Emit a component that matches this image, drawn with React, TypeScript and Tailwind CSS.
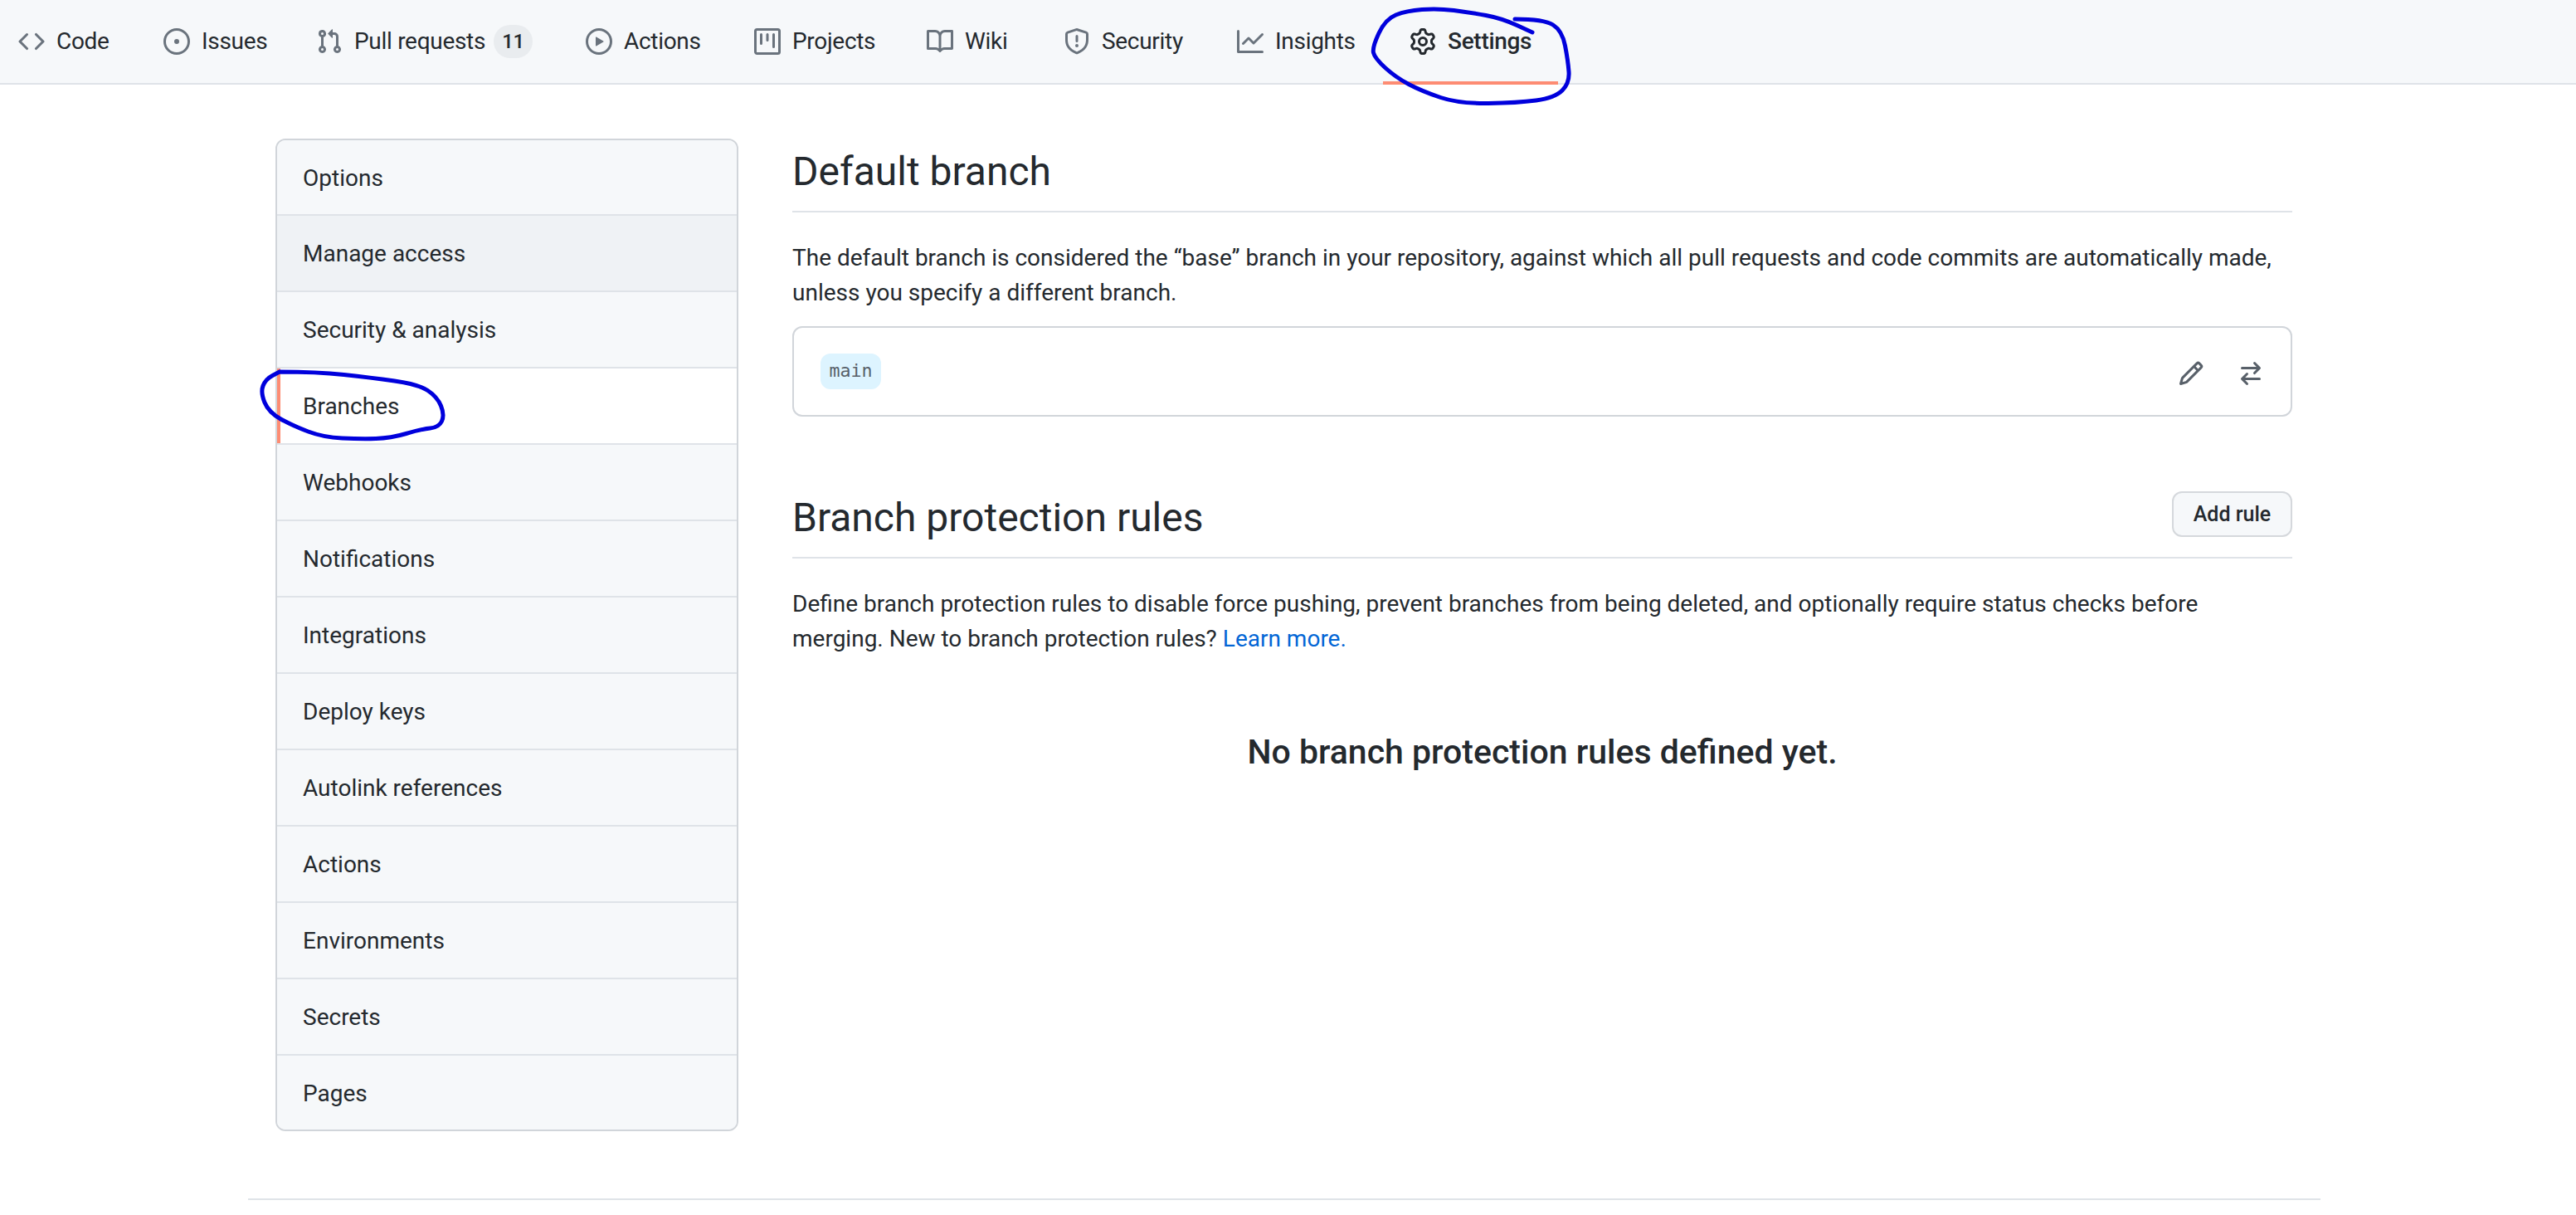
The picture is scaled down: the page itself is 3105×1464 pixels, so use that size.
const FONT = "font-['Roboto',sans-serif]";

const octicons = {
  code: "M4.72 3.22a.75.75 0 011.06 1.06L2.06 8l3.72 3.72a.75.75 0 11-1.06 1.06L.47 8.53a.75.75 0 010-1.06l4.25-4.25zm6.56 0a.75.75 0 10-1.06 1.06L13.94 8l-3.72 3.72a.75.75 0 101.06 1.06l4.25-4.25a.75.75 0 000-1.06l-4.25-4.25z",
  issue: "M8 9.5a1.5 1.5 0 100-3 1.5 1.5 0 000 3zM8 0a8 8 0 100 16A8 8 0 008 0zM1.5 8a6.5 6.5 0 1113 0 6.5 6.5 0 01-13 0z",
  pr: "M7.177 3.073L9.573.677A.25.25 0 0110 .854v4.792a.25.25 0 01-.427.177L7.177 3.427a.25.25 0 010-.354zM3.75 2.5a.75.75 0 100 1.5.75.75 0 000-1.5zm-2.25.75a2.25 2.25 0 113 2.122v5.256a2.251 2.251 0 11-1.5 0V5.372A2.25 2.25 0 011.5 3.25zM11 2.5h-1V4h1a1 1 0 011 1v5.628a2.251 2.251 0 101.5 0V5A2.5 2.5 0 0011 2.5zm1 10.25a.75.75 0 111.5 0 .75.75 0 01-1.5 0zM3.75 12a.75.75 0 100 1.5.75.75 0 000-1.5z",
  play: "M1.5 8a6.5 6.5 0 1113 0 6.5 6.5 0 01-13 0zM8 0a8 8 0 100 16A8 8 0 008 0zM6.379 5.227A.25.25 0 006 5.442v5.117a.25.25 0 00.379.214l4.264-2.559a.25.25 0 000-.428L6.379 5.227z",
  project: "M1.75 0A1.75 1.75 0 000 1.75v12.5C0 15.216.784 16 1.75 16h12.5A1.75 1.75 0 0016 14.25V1.75A1.75 1.75 0 0014.25 0H1.75zM1.5 1.75a.25.25 0 01.25-.25h12.5a.25.25 0 01.25.25v12.5a.25.25 0 01-.25.25H1.75a.25.25 0 01-.25-.25V1.75zM11.75 3a.75.75 0 00-.75.75v7.5a.75.75 0 001.5 0v-7.5a.75.75 0 00-.75-.75zm-8.25.75a.75.75 0 011.5 0v5.5a.75.75 0 01-1.5 0v-5.5zM8 3a.75.75 0 00-.75.75v3.5a.75.75 0 001.5 0v-3.5A.75.75 0 008 3z",
  book: "M0 1.75A.75.75 0 01.75 1h4.253c1.227 0 2.317.59 3 1.501A3.744 3.744 0 0111.006 1h4.245a.75.75 0 01.75.75v10.5a.75.75 0 01-.75.75h-4.507a2.25 2.25 0 00-1.591.659l-.622.621a.75.75 0 01-1.06 0l-.622-.621A2.25 2.25 0 005.258 13H.75a.75.75 0 01-.75-.75V1.75zm8.755 3a2.25 2.25 0 012.25-2.25H14.5v9h-3.757c-.71 0-1.4.201-1.992.572l.004-7.322zm-1.504 7.324l.004-5.073-.002-2.253A2.25 2.25 0 005.003 2.5H1.5v9h3.757a3.75 3.75 0 011.994.574z",
  shield: "M7.467.133a1.75 1.75 0 011.066 0l5.25 1.68A1.75 1.75 0 0115 3.48V7c0 1.566-.32 3.182-1.303 4.682-.983 1.498-2.585 2.813-5.032 3.855a1.7 1.7 0 01-1.33 0c-2.447-1.042-4.049-2.357-5.032-3.855C1.32 10.182 1 8.566 1 7V3.48a1.75 1.75 0 011.217-1.667l5.25-1.68zm.61 1.429a.25.25 0 00-.153 0l-5.25 1.68a.25.25 0 00-.174.238V7c0 1.358.275 2.666 1.057 3.86.784 1.194 2.121 2.34 4.366 3.297a.2.2 0 00.154 0c2.245-.956 3.582-2.104 4.366-3.298C13.225 9.666 13.5 8.36 13.5 7V3.48a.25.25 0 00-.174-.237l-5.25-1.68zM9 10.5a1 1 0 11-2 0 1 1 0 012 0zm-.25-5.75a.75.75 0 10-1.5 0v3a.75.75 0 001.5 0v-3z",
  graph: "M1.5 1.75a.75.75 0 00-1.5 0v12.5c0 .414.336.75.75.75h14.5a.75.75 0 000-1.5H1.5V1.75zm14.28 2.53a.75.75 0 00-1.06-1.06L10 7.94 7.53 5.47a.75.75 0 00-1.06 0L3.22 8.72a.75.75 0 001.06 1.06L7 7.06l2.47 2.47a.75.75 0 001.06 0l5.25-5.25z",
  gear: "M7.429 1.525a6.593 6.593 0 011.142 0c.036.003.108.036.137.146l.289 1.105c.147.56.55.967.997 1.189.174.086.341.183.501.29.417.278.97.423 1.53.27l1.102-.303c.11-.03.175.016.195.046.219.31.41.641.573.989.014.031.022.11-.059.19l-.815.806c-.411.406-.562.957-.53 1.456a4.588 4.588 0 010 .582c-.032.499.119 1.05.53 1.456l.815.806c.08.08.073.159.059.19a6.494 6.494 0 01-.573.99c-.02.029-.086.074-.195.045l-1.103-.303c-.559-.153-1.112-.008-1.529.27-.16.107-.327.204-.5.29-.449.222-.851.628-.998 1.189l-.289 1.105c-.029.11-.101.143-.137.146a6.613 6.613 0 01-1.142 0c-.036-.003-.108-.037-.137-.146l-.289-1.105c-.147-.56-.55-.967-.997-1.189a4.502 4.502 0 01-.501-.29c-.417-.278-.97-.423-1.53-.27l-1.102.303c-.11.03-.175-.016-.195-.046a6.492 6.492 0 01-.573-.989c-.014-.031-.022-.11.059-.19l.815-.806c.411-.406.562-.957.53-1.456a4.587 4.587 0 010-.582c.032-.499-.119-1.05-.53-1.456l-.815-.806c-.08-.08-.073-.159-.059-.19a6.44 6.44 0 01.573-.99c.02-.029.086-.075.195-.045l1.103.303c.559.153 1.112.008 1.529-.27.16-.107.327-.204.5-.29.449-.222.851-.628.998-1.189l.289-1.105c.029-.11.101-.143.137-.146zM8 0c-.236 0-.47.01-.701.03-.743.065-1.29.615-1.458 1.261l-.29 1.106c-.017.066-.078.158-.211.224a5.994 5.994 0 00-.668.386c-.123.082-.233.09-.3.071L3.27 2.776c-.644-.177-1.392.02-1.82.63a7.977 7.977 0 00-.704 1.217c-.315.675-.111 1.422.363 1.891l.815.806c.05.048.098.147.088.294a6.084 6.084 0 000 .772c.01.147-.038.246-.088.294l-.815.806c-.474.469-.678 1.216-.363 1.891.2.428.436.835.704 1.218.428.609 1.176.806 1.82.63l1.103-.303c.066-.019.176-.011.299.071.213.143.436.272.668.386.133.066.194.158.212.224l.289 1.106c.169.646.715 1.196 1.458 1.26a8.094 8.094 0 001.402 0c.743-.064 1.29-.614 1.458-1.26l.29-1.106c.017-.066.078-.158.211-.224a5.98 5.98 0 00.668-.386c.123-.082.233-.09.3-.071l1.102.302c.644.177 1.392-.02 1.82-.63.268-.382.505-.789.704-1.217.315-.675.111-1.422-.364-1.891l-.814-.806c-.05-.048-.098-.147-.088-.294a6.1 6.1 0 000-.772c-.01-.147.039-.246.088-.294l.814-.806c.475-.469.679-1.216.364-1.891a7.992 7.992 0 00-.704-1.218c-.428-.609-1.176-.806-1.82-.63l-1.103.303c-.066.019-.176.011-.299-.071a5.991 5.991 0 00-.668-.386c-.133-.066-.194-.158-.212-.224L10.16 1.29C9.99.645 9.444.095 8.701.031A8.094 8.094 0 008 0zm1.5 8a1.5 1.5 0 11-3 0 1.5 1.5 0 013 0zM11 8a3 3 0 11-6 0 3 3 0 016 0z",
  pencil: "M11.013 1.427a1.75 1.75 0 012.474 0l1.086 1.086a1.75 1.75 0 010 2.474l-8.61 8.61c-.21.21-.47.364-.756.445l-3.251.93a.75.75 0 01-.927-.928l.929-3.25a1.75 1.75 0 01.445-.758l8.61-8.61zm1.414 1.06a.25.25 0 00-.354 0L10.811 3.75l1.439 1.44 1.263-1.263a.25.25 0 000-.354l-1.086-1.086zM11.189 6.25L9.75 4.81l-6.286 6.287a.25.25 0 00-.064.108l-.558 1.953 1.953-.558a.249.249 0 00.108-.064l6.286-6.286z",
  swap: "M5.22 14.78a.75.75 0 001.06-1.06L4.56 12h8.69a.75.75 0 000-1.5H4.56l1.72-1.72a.75.75 0 00-1.06-1.06l-3 3a.75.75 0 000 1.06l3 3zm5.56-6.5a.75.75 0 11-1.06-1.06l1.72-1.72H2.75a.75.75 0 010-1.5h8.69L9.72 2.28a.75.75 0 011.06-1.06l3 3a.75.75 0 010 1.06l-3 3z",
};

function Octicon({ name, className }: { name: keyof typeof octicons; className: string }) {
  return (
    <svg viewBox="0 0 16 16" width="32" height="32" fill="currentColor" fillRule="evenodd" className={`shrink-0 ${className}`}>
      <path d={octicons[name]} />
    </svg>
  );
}

const tabs: { label: string; icon: keyof typeof octicons; width: string; count?: string; active?: boolean }[] = [
  { label: "Code", icon: "code", width: "w-[143px]" },
  { label: "Issues", icon: "issue", width: "w-[184px]" },
  { label: "Pull requests", icon: "pr", width: "w-[325px]", count: "11" },
  { label: "Actions", icon: "play", width: "w-[203px]" },
  { label: "Projects", icon: "project", width: "w-[208px]" },
  { label: "Wiki", icon: "book", width: "w-[165px]" },
  { label: "Security", icon: "shield", width: "w-[209px]" },
  { label: "Insights", icon: "graph", width: "w-[208px]" },
  { label: "Settings", icon: "gear", width: "w-[211px]", active: true },
];

const menu = ["Options", "Manage access", "Security & analysis", "Branches", "Webhooks", "Notifications", "Integrations", "Deploy keys", "Autolink references", "Actions", "Environments", "Secrets", "Pages"];

// hand-drawn marker rings, traced from the picture
function smooth(pts: number[][]) {
  let d = `M${pts[0][0]} ${pts[0][1]}`;
  for (let i = 1; i < pts.length - 1; i++) {
    const mx = (pts[i][0] + pts[i + 1][0]) / 2;
    const my = (pts[i][1] + pts[i + 1][1]) / 2;
    d += ` Q${pts[i][0]} ${pts[i][1]} ${mx} ${my}`;
  }
  const last = pts[pts.length - 1];
  return `${d} L${last[0]} ${last[1]}`;
}

const settingsRing = smooth([[1826, 23], [1861, 23], [1883, 37], [1890, 73], [1892, 100], [1874, 118], [1829, 124], [1759, 125], [1714, 110], [1682, 93], [1657, 70], [1654, 57], [1670, 23], [1695, 13], [1733, 10], [1772, 15], [1810, 22], [1847, 39]]);
const branchesRing = smooth([[337, 448], [382, 448], [447, 455], [504, 463], [527, 478], [536, 500], [529, 515], [508, 517], [471, 528], [435, 529], [390, 527], [353, 513], [324, 497], [314, 473], [320, 457], [337, 448]]);

export default function App() {
  return (
    <div className={`relative h-[1464px] overflow-hidden bg-white text-[28px] text-[#24292e] ${FONT}`}>
      <nav className="flex h-[102px] border-b-2 border-[#dfe3e8] bg-[#f6f8fa] pl-[22px]">
        {tabs.map((tab, i) => (
          <div
            key={tab.label}
            className={`relative flex h-[100px] shrink-0 items-center gap-[14px] tracking-[-0.3px] whitespace-nowrap ${tab.width} ${i === 0 ? "pl-0" : "pl-[32px]"} ${tab.active ? "font-medium" : ""}`}
          >
            <Octicon name={tab.icon} className={tab.active ? "text-[#24292e]" : "text-[#6a737d]"} />
            <span>{tab.label}</span>
            {tab.count && (
              <span className="-ml-[4px] flex h-[40px] w-[47px] items-center justify-center rounded-full bg-[#e9ecef] text-[24px] font-medium">{tab.count}</span>
            )}
            {tab.active && <span className="absolute inset-x-0 -bottom-[2px] h-[4px] bg-[#fd8c73]" />}
          </div>
        ))}
      </nav>

      <div className="ml-[299px] w-[2498px] px-[33px] pt-[65px]">
        <div className="flex gap-[65px]">
          <ul className="w-[558px] shrink-0 overflow-hidden rounded-[12px] border-2 border-[#d1d5da]">
            {menu.map((item) => {
              const selected = item === "Branches";
              return (
                <li
                  key={item}
                  className={`relative flex h-[92px] items-center border-b-2 border-[#dfe3e8] pt-[2px] pl-[31px] first:h-[91px] last:h-[89px] last:border-b-0 ${selected ? "bg-white" : item === "Manage access" ? "bg-[#eff2f5]" : "bg-[#f6f8fa]"}`}
                >
                  {selected && <span className="absolute inset-y-0 left-0 w-[4px] bg-[#fd8c73]" />}
                  {item}
                </li>
              );
            })}
          </ul>

          <main className="w-[1808px]">
            <h2 className="flex h-[89px] items-center border-b-2 border-[#dfe3e8] pb-[7px] text-[48px] leading-[60px] font-normal">Default branch</h2>
            <p className="mt-[34px] text-[28px] leading-[42px] whitespace-nowrap">
              The default branch is considered the “base” branch in your repository, against which all pull requests and code commits are automatically made,
              <br />
              unless you specify a different branch.
            </p>
            <div className="mt-[19px] flex h-[109px] items-center justify-between rounded-[12px] border-2 border-[#d1d5da] pr-[32px] pl-[32px]">
              <span className="flex h-[43px] w-[73px] items-center justify-center rounded-[12px] bg-[#ddf4ff] font-['DejaVu_Sans_Mono',monospace] text-[21.6px] text-[#586069]">main</span>
              <div className="mt-[4px] flex items-center gap-[40px] text-[#586069]">
                <Octicon name="pencil" className="" />
                <Octicon name="swap" className="" />
              </div>
            </div>

            <div className="mt-[90px] flex h-[81px] items-start justify-between border-b-2 border-[#dfe3e8]">
              <h2 className="mt-[2px] text-[48px] leading-[60px] font-normal">Branch protection rules</h2>
              <button className="h-[55px] w-[145px] rounded-[12px] border-2 border-[#d5d8dc] bg-[#f6f8fa] text-[25px] font-medium">Add rule</button>
            </div>
            <p className="mt-[34px] leading-[42px] whitespace-nowrap">
              Define branch protection rules to disable force pushing, prevent branches from being deleted, and optionally require status checks before
              <br />
              merging. New to branch protection rules? <span className="text-[#0366d6]">Learn more.</span>
            </p>
            <p className="mt-[90px] text-center text-[41px] leading-[50px] font-medium">No branch protection rules defined yet.</p>
          </main>
        </div>
        <div className="-mx-[33px] mt-[81px] border-t-2 border-[#dfe3e8]" />
      </div>

      <svg width="3105" height="1464" fill="none" stroke="#0000dc" strokeWidth="5" strokeLinecap="round" strokeLinejoin="round" className="pointer-events-none absolute inset-0">
        <path d={settingsRing} />
        <path d={branchesRing} />
      </svg>
    </div>
  );
}
